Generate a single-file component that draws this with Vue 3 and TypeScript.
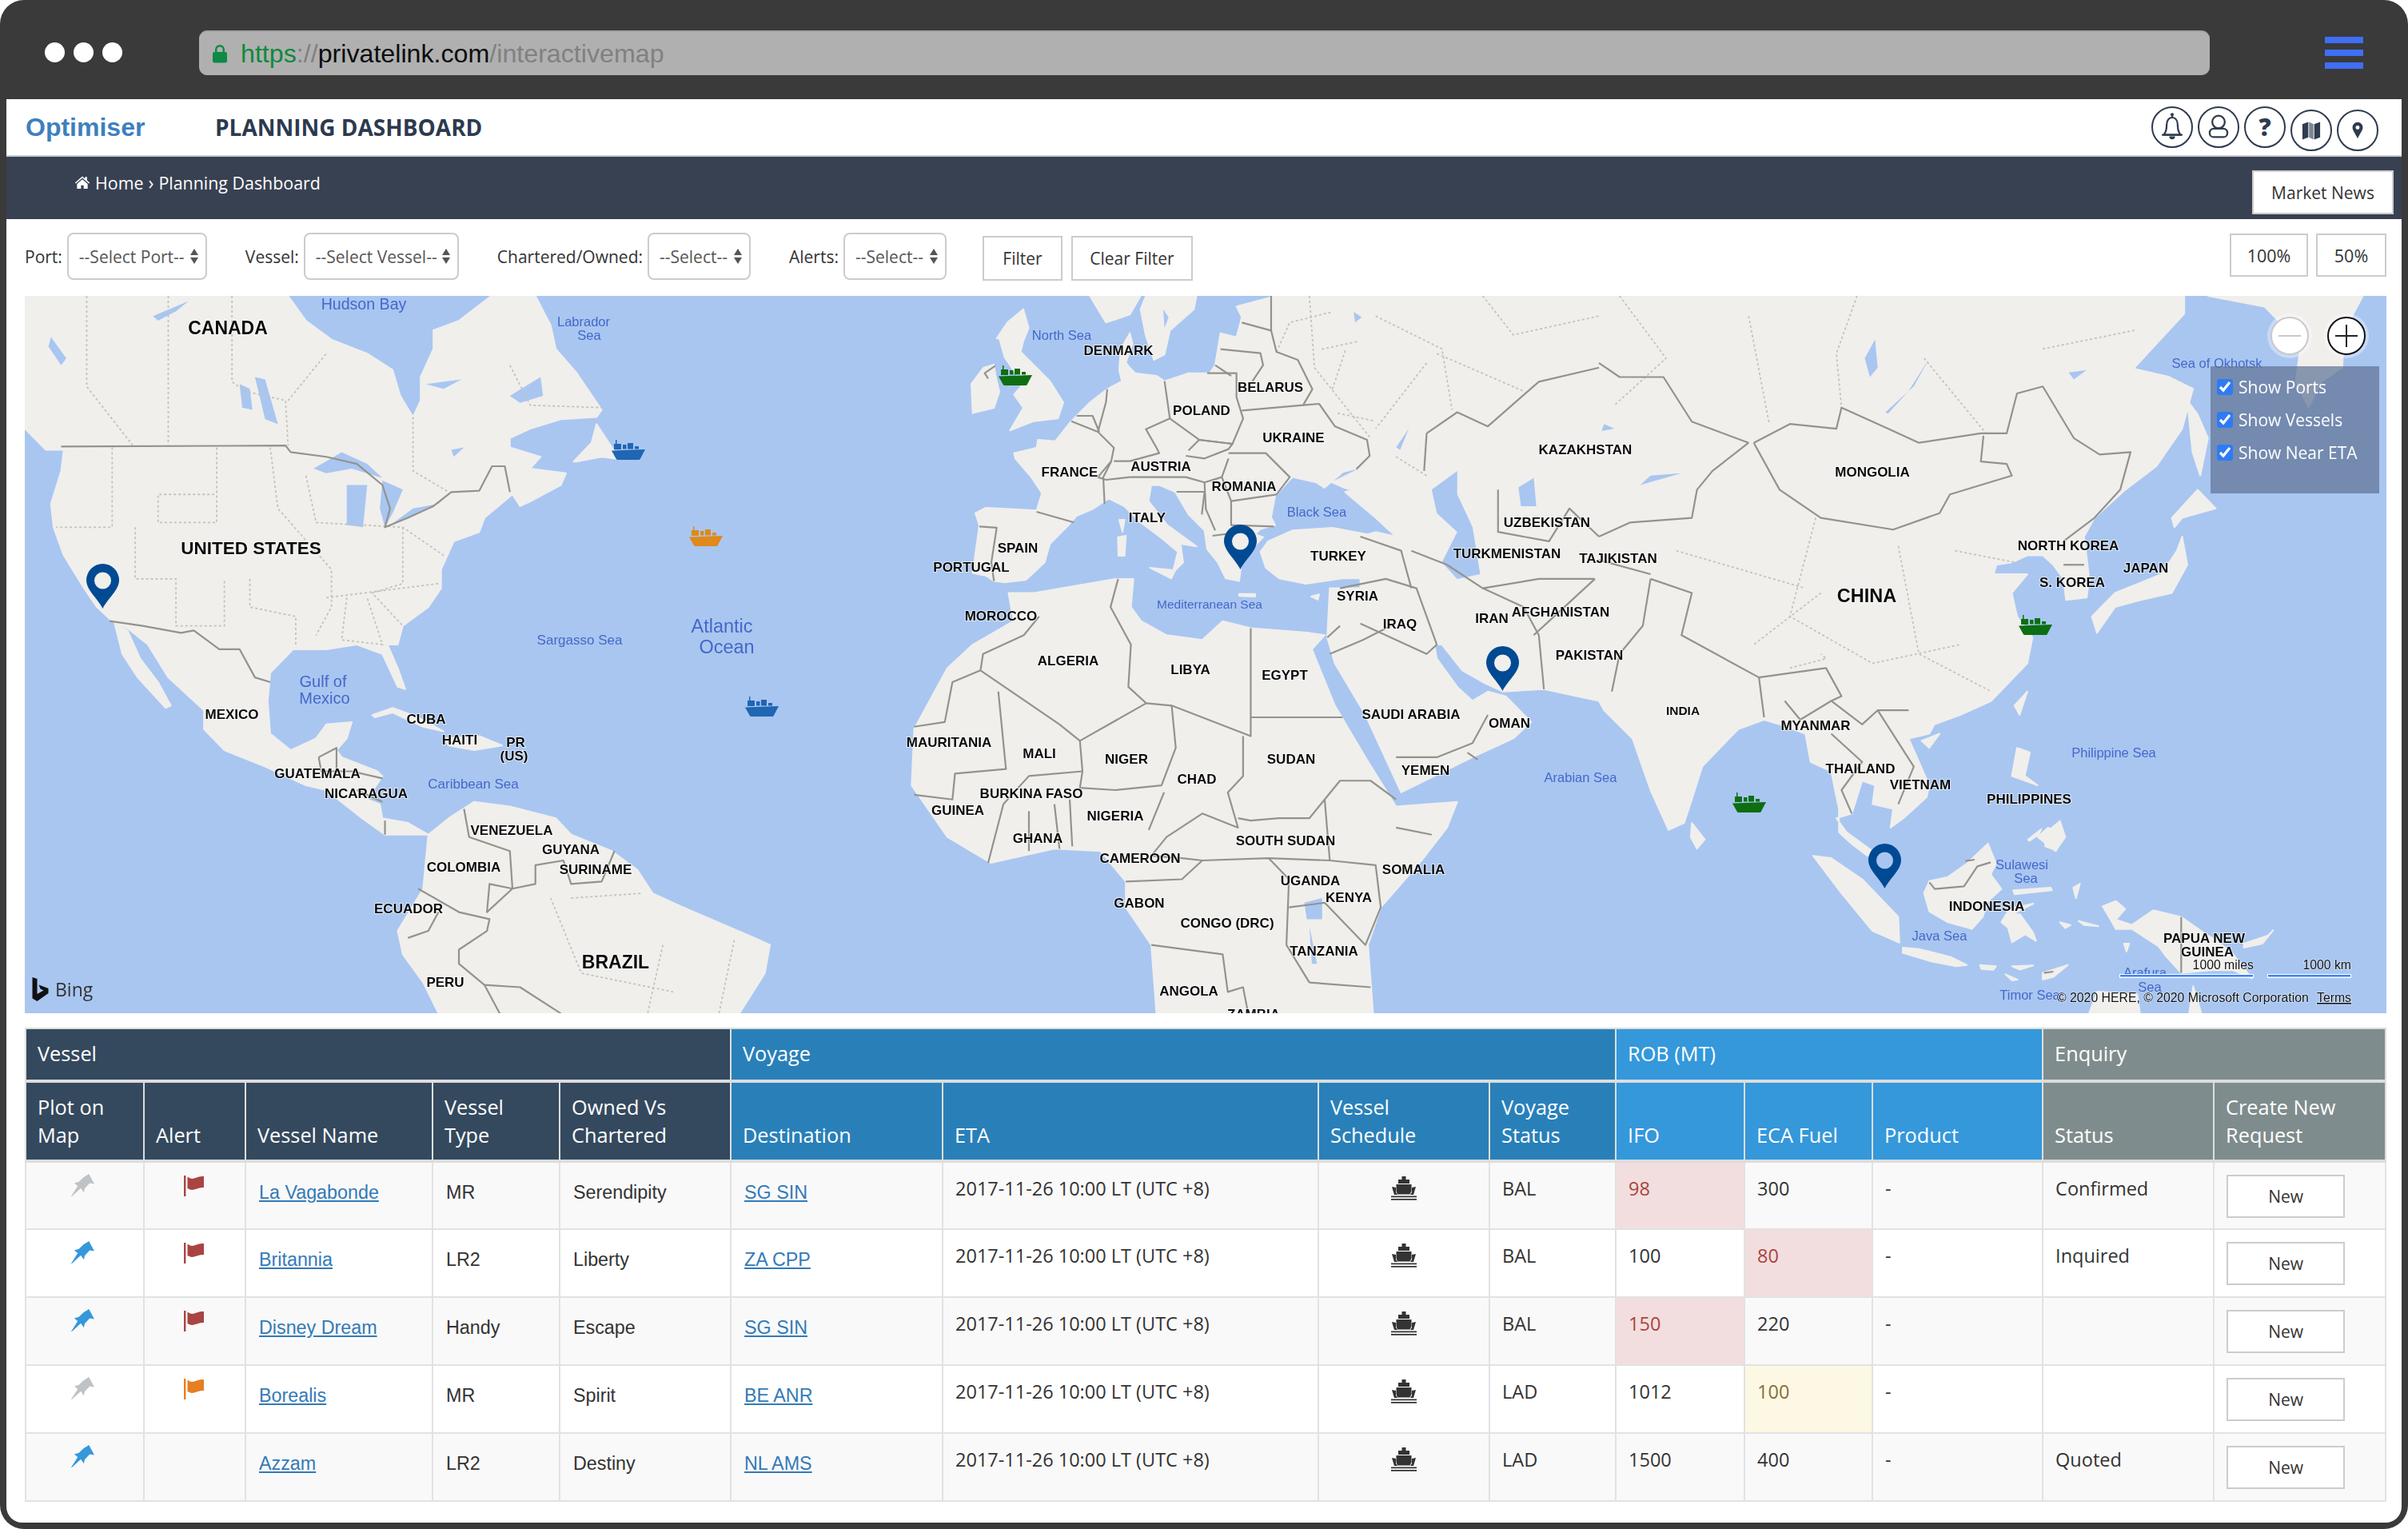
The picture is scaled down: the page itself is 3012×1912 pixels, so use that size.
<script setup lang="ts">
// Planning dashboard inside a browser mockup. The map is a hand drawn svg,
// its shapes are grouped per tile so each one can be placed with one transform.
interface Tile {
  at: string
  land: string[]
  water?: string[]
  borders?: string[]
  dotted?: string[]
}

const tiles: Tile[] = [
  {
    at: 'translate(0 360) scale(.6378 .5869)',
    land: [
      '49,17 565,17 600,70 650,110 720,140 770,175 785,230 810,275 825,240 825,190 850,130 850,90 900,70 960,20 965,17 1050,17 1080,80 1090,130 1130,180 1180,260 1170,275 1100,280 1040,300 1000,320 1000,340 1060,360 1040,385 1110,395 1100,420 1040,455 1020,465 1005,440 950,490 940,520 890,540 865,600 865,640 840,680 790,720 780,760 760,760 780,810 795,855 780,850 750,780 700,760 640,770 575,770 530,820 525,880 530,950 570,985 620,960 640,930 690,925 680,960 660,985 670,1000 740,1030 750,1040 720,1090 745,1100 750,1130 800,1140 840,1165 800,1165 755,1165 710,1130 640,1070 600,1060 520,1020 440,985 400,940 400,900 330,830 290,760 250,725 220,710 190,680 165,640 125,570 105,510 100,460 120,390 125,345 90,345 49,300',
      '225,715 250,730 275,790 310,840 335,890 325,895 270,830 240,780',
      '730,910 770,895 820,915 870,945 830,935 770,905 735,915',
      '870,960 940,955 985,975 930,985 880,975',
      '1125,370 1160,330 1170,290 1200,340 1215,365 1180,360 1130,370',
      '840,1165 880,1130 930,1095 1000,1105 1090,1130 1120,1165 1200,1200 1250,1240 1280,1290 1340,1320 1480,1385 1510,1400 1500,1460 1450,1546 860,1546 830,1480 790,1420 780,1370 830,1280 835,1220'
    ],
    water: [
      '615,385 670,350 720,375 750,405 690,385 640,395',
      '680,420 720,420 712,510 680,505',
      '750,410 790,430 770,480 755,510 745,470',
      '760,510 810,470 860,460 880,440 850,465 800,490',
      '500,190 520,195 545,290 520,280',
      '300,60 370,28 345,50 310,70',
      '470,205 490,215 495,260 475,255',
      '100,105 130,150 120,165 95,125',
      '835,205 905,195 870,215',
      '1000,230 1060,190 1065,230 1020,245',
      '885,345 910,340 890,360'
    ],
    borders: [
      '120,338 560,336 570,350 640,360 700,375 750,420 765,470 755,510 800,490 850,465 885,435 940,432 965,380 990,380 1000,435',
      '215,710 280,720 355,735 380,730 430,770 470,770 500,830 530,840',
      '625,1000 660,980 660,1030',
      '625,1000 630,1030 690,1030 750,1045',
      '700,1070 750,1095',
      '755,1135 755,1165',
      '910,1110 920,1170 1000,1200 1005,1280 960,1270 955,1330 1005,1280 1050,1270 1050,1230 1105,1220 1120,1270 1180,1265 1205,1200',
      '820,1280 900,1330 960,1345 955,1370 900,1410 900,1440 950,1485 1020,1490 1100,1546',
      '860,1330 840,1370 800,1385',
      '950,1485 980,1546'
    ],
    dotted: [
      '170,17 170,210 260,335',
      '330,17 330,335',
      '455,17 455,200 480,220 560,240 565,336',
      '565,240 640,140',
      '810,275 810,390 880,435',
      '1000,165 1040,250 1180,255',
      '220,340 220,510 110,510',
      '425,340 425,500 310,500 310,440 420,440',
      '265,510 265,620 345,620 345,720 440,720 440,620',
      '530,340 545,470 650,600 650,680 620,740',
      '600,400 620,500 790,510 870,570',
      '640,660 860,630',
      '490,620 490,680 580,700 580,760',
      '680,660 670,750 750,760 720,660',
      '790,510 790,630 730,650 790,720',
      '1080,1300 1140,1460 1320,1500',
      '1300,1400 1270,1546',
      '1440,1390 1410,1546',
      '1120,1300 1260,1290'
    ]
  },
  {
    at: 'translate(1000 360) scale(.6378 .5869)',
    land: [
      '1100,17 1100,425 1070,435 1130,490 1170,530 1130,520 1100,530 1100,640 1040,640 1035,745 1050,800 1110,910 1180,1075 1320,1000 1400,960 1435,925 1385,870 1350,860 1320,880 1290,850 1250,790 1245,760 1260,760 1300,815 1340,840 1380,860 1460,855 1568,880 1568,17',
      '410,650 460,650 620,620 655,620 650,680 670,710 720,740 790,750 830,710 885,725 1000,735 1030,740 1005,770 1050,890 1110,1000 1170,1105 1290,1095 1270,1150 1220,1220 1140,1320 1115,1400 1125,1546 700,1546 690,1400 640,1320 640,1265 590,1200 500,1195 375,1225 290,1170 220,1060 225,940 290,810 340,760 420,710'
    ],
    water: [
      '1240,430 1290,390 1290,440 1320,510 1335,610 1290,620 1260,585 1290,520 1250,480',
      '1410,425 1440,405 1445,465 1415,465',
      '990,1310 1025,1300 1025,1345 995,1345',
      '1000,1360 1015,1440 1005,1440',
      '1170,340 1195,300 1178,345'
    ],
    borders: [
      '355,815 510,930 550,965 680,885 730,890 885,955 885,725',
      '625,620 610,680 650,760 645,850 680,885',
      '470,700 440,740 360,780 355,815',
      '225,935 285,925 300,840 355,815',
      '390,860 405,1025 305,1035 300,1090 225,1080',
      '550,965 555,1030 450,1040 400,1100 370,1225',
      '730,890 738,980 710,1060 620,1070 550,1065 555,1030',
      '870,955 870,1040 840,1075 860,1150 790,1120 720,1170 690,1210',
      '885,915 1065,915',
      '860,1130 885,1135 940,1130 1000,1130 1030,1090 1060,1050 1120,1050 1170,1090',
      '1170,1150 1240,1165',
      '535,1190 530,1090',
      '450,1115 450,1200',
      '500,1100 510,1195',
      '685,1155 715,1075',
      '690,1210 750,1215 790,1220 920,1215 960,1260 955,1400 1000,1480',
      '640,1265 750,1260 790,1220',
      '690,1400 830,1420 840,1500 870,1490 880,1546',
      '1040,1220 1130,1230 1140,1320 1110,1400 1030,1310 960,1320',
      '1000,1480 1120,1490',
      '920,1215 1040,1220 1030,1090',
      '1040,780 1105,750 1160,720',
      '1170,1000 1250,1000 1320,970 1350,910',
      '1310,990 1330,1005',
      '1100,715 1230,780 1250,760 1210,640 1150,620 1060,640',
      '1060,720 1035,745',
      '1230,310 1290,265 1350,295 1450,200 1568,170',
      '1230,310 1225,390',
      '1270,590 1340,640 1450,620 1560,620',
      '1370,430 1370,520 1470,540 1510,470 1568,530',
      '1420,680 1450,740 1460,855',
      '1340,640 1420,680',
      '1560,620 1480,700 1440,740',
      '1100,530 1180,560 1200,640',
      '1200,560 1270,590'
    ],
    dotted: [
      '1130,60 1260,130 1280,260',
      '1250,140 1420,220',
      '1000,17 1010,170 1120,320',
      '1340,17 1400,100 1568,60',
      '1230,160 1130,300',
      '1170,360 1230,400'
    ]
  },
  {
    at: 'translate(2000 360) scale(.6456 .5869)',
    land: [
      '0,17 1134,17 1134,55 1036,172 1103,189 1151,215 1130,300 1080,380 1020,430 960,490 940,530 950,620 945,660 905,665 900,620 880,590 860,570 830,570 800,585 770,590 765,610 830,610 800,650 810,700 840,745 830,800 760,880 700,910 650,930 640,950 600,960 640,1060 635,1085 590,1130 565,1150 570,1110 530,1100 535,1060 510,1050 490,1120 460,1130 480,1160 530,1200 520,1210 490,1185 465,1160 465,1110 450,1030 410,1010 400,950 350,930 320,920 270,940 200,1020 180,1090 165,1140 135,1155 100,1070 65,960 10,900 0,880',
      '1180,17 1480,17 1445,90 1440,170 1400,200 1375,255 1350,200 1360,120 1290,40',
      '955,700 1000,650 1090,610 1120,560 1130,530 1140,590 1110,650 1050,665 1000,680 965,735',
      '1110,490 1160,430 1195,470 1130,490 1115,510',
      '1160,270 1140,240 1150,350 1165,400 1180,320',
      '805,890 830,860 815,910',
      '625,965 660,950 640,980',
      '180,1140 205,1175 190,1195 178,1170',
      '415,1210 450,1215 510,1260 580,1340 582,1395 530,1370 470,1290',
      '810,980 835,990 825,1040 850,1060 800,1040',
      '870,1150 900,1170 885,1200 850,1170'
    ],
    water: [
      '555,265 610,210 640,150 600,220 560,268',
      '80,420 160,395 100,400',
      '515,150 535,110 540,170 525,190',
      '910,180 945,175 920,195',
      '10,290 30,300 5,305'
    ],
    borders: [
      '0,160 40,190 125,190 180,285 290,330',
      '300,330 370,290 460,300 470,255 560,300 620,330 740,310 790,310 810,225 860,210 920,320 970,355 1030,350 1010,430 960,490 900,540',
      '300,330 350,430 430,490 570,515 660,480 680,440 800,400 790,375 740,370 745,315',
      '290,330 220,390 190,430 180,490 60,500 0,530',
      '100,620 180,650 160,740 310,830 440,810 470,870 450,880',
      '310,830 320,915',
      '360,880 390,920 450,880 510,930 540,900 600,900',
      '450,950 510,1010 470,1070 490,1120',
      '540,900 610,1020 580,1100',
      '100,620 85,720 40,780 25,860',
      '0,580 100,610',
      '900,590 940,590'
    ],
    dotted: [
      '40,17 130,150 30,250',
      '290,60 330,290',
      '500,17 460,140 470,255',
      '630,150 750,310',
      '860,130 1040,90',
      '420,490 370,700 530,800 700,760',
      '580,550 620,780 760,860',
      '690,560 830,590',
      '150,560 400,640',
      '430,650 300,760',
      '370,810 440,790 430,780'
    ]
  },
  {
    at: 'translate(1200 370) scale(.3333)',
    land: [
      '1185,750 1170,830 1185,860 1130,875 1110,895 1140,905 1060,990 1050,1070 1000,1060 970,1000 930,950 920,880 860,820 810,735 750,710 720,710 710,770 780,860 890,940 830,930 840,1000 800,1040 820,960 760,910 680,850 620,790 560,760 500,800 440,825 410,860 340,930 320,1000 250,1065 170,1075 130,1070 100,1050 50,1040 75,860 60,815 100,795 290,805 310,740 270,680 210,610 205,590 290,570 295,540 360,545 420,470 490,400 555,350 610,320 600,280 605,200 640,140 650,180 625,250 640,270 660,290 740,300 770,320 860,290 940,290 960,260 980,140 1040,155 1060,80 1040,40 1190,0 1560,0 1560,750 1445,720 1400,700 1520,640 1440,660 1370,720 1340,700 1250,680',
      '700,0 680,50 700,150 730,240 770,220 790,130 880,50 890,0',
      '490,0 550,100 640,70 680,0',
      '140,160 180,100 240,50 260,120 240,170 230,210 290,270 340,320 390,400 370,460 280,470 190,505 240,420 205,370 240,330 210,290 170,230 150,160',
      '45,330 90,270 130,258 135,295 150,360 130,420 50,440',
      '1130,960 1160,920 1250,880 1400,870 1560,900 1560,1060 1440,1060 1300,1080 1200,1060 1150,1020',
      '595,905 625,900 620,975 597,975',
      '600,840 620,840 612,885',
      '715,1020 810,1030 795,1060',
      '1050,1118 1110,1118 1110,1128 1050,1126',
      '1320,1128 1350,1120 1345,1140'
    ],
    water: ['765,50 785,80 770,120', '895,115 910,130 890,155', '1480,60 1510,80 1485,100'],
    borders: [
      '420,470 520,510 580,570 570,620 540,680 545,780',
      '520,510 550,400 555,350',
      '440,450 500,450 525,510',
      '770,320 790,460 700,500 740,570 750,590 640,620 580,620',
      '570,620 520,680 550,690 640,680',
      '790,460 900,540 1025,555 1065,460 1040,380 1040,290 930,290',
      '960,260 1020,300',
      '980,200 1130,215 1140,260 1100,320',
      '1060,100 1170,130 1190,210 1270,240 1325,350 1290,410 1060,430',
      '1170,130 1170,0',
      '1290,410 1350,405 1410,490 1530,540 1540,600 1490,650',
      '860,580 900,540 1025,555 1010,575 920,610 850,600',
      '1010,590 1150,590 1240,680 1190,745 1020,770 985,680 1010,610',
      '640,680 740,680 850,680 920,700 985,680',
      '815,735 920,735 910,820',
      '1020,770 1020,860 1180,865',
      '950,900 1100,880',
      '920,700 925,800 960,880',
      '75,865 140,870 120,1000 130,1070',
      '290,810 430,850',
      '135,262 95,290 108,310'
    ],
    dotted: ['1190,210 1240,100 1400,60', '1360,200 1500,170', '1400,350 1450,200', '1420,440 1560,470']
  },
  {
    at: 'translate(2380 980) scale(.3333)',
    land: [
      '80,410 100,365 170,350 240,300 320,225 350,300 330,340 370,395 320,440 300,500 260,545 170,520 100,480',
      '370,520 400,470 490,450 410,490 440,490 490,560 500,590 460,565 410,595 395,540',
      '415,400 555,390 560,400 420,415',
      '0,615 60,620 180,650 240,680 200,685 100,665 0,635',
      '290,680 350,685 340,698 295,695',
      '410,685 490,682 440,698',
      '385,715 430,735 410,738',
      '525,710 620,680 565,725 525,735',
      '530,190 590,140 610,200 575,250 535,235',
      '470,210 520,170 510,190 475,215',
      '750,460 800,440 835,470 800,510 860,530 940,475 1045,500 1130,560 1180,590 1240,640 1310,730 1240,700 1160,700 1045,710 990,650 960,610 860,545 800,545 780,510',
      '590,520 630,530 610,542',
      '660,515 735,535 680,530',
      '1280,600 1370,570 1390,550 1350,600 1280,615',
      '640,390 665,375 650,430',
      '700,860 730,780 880,790 890,860',
      '1075,860 1090,760 1120,860',
      '830,600 850,600 840,630'
    ],
    borders: ['100,370 120,395 230,385 280,310 330,295', '235,290 270,285', '1045,500 1045,710', '530,710 565,705']
  }
]

interface MapLabel {
  t: string
  x: number
  y: number
  s?: number
}

// x / y = centre of the label in page pixels
const countries: MapLabel[] = [
  { t: 'CANADA', x: 285, y: 410, s: 23 },
  { t: 'UNITED STATES', x: 314, y: 685, s: 22.5 },
  { t: 'MEXICO', x: 290, y: 893 },
  { t: 'CUBA', x: 533, y: 899 },
  { t: 'HAITI', x: 575, y: 925 },
  { t: 'PR', x: 645, y: 928 },
  { t: '(US)', x: 643, y: 945 },
  { t: 'GUATEMALA', x: 397, y: 967 },
  { t: 'NICARAGUA', x: 458, y: 992 },
  { t: 'VENEZUELA', x: 640, y: 1038 },
  { t: 'GUYANA', x: 714, y: 1062 },
  { t: 'SURINAME', x: 745, y: 1087 },
  { t: 'COLOMBIA', x: 580, y: 1084 },
  { t: 'ECUADOR', x: 511, y: 1136 },
  { t: 'BRAZIL', x: 770, y: 1203, s: 23 },
  { t: 'PERU', x: 557, y: 1228 },
  { t: 'DENMARK', x: 1399, y: 438 },
  { t: 'BELARUS', x: 1589, y: 484 },
  { t: 'POLAND', x: 1503, y: 513 },
  { t: 'UKRAINE', x: 1618, y: 547 },
  { t: 'KAZAKHSTAN', x: 1983, y: 562 },
  { t: 'FRANCE', x: 1338, y: 590 },
  { t: 'AUSTRIA', x: 1452, y: 583 },
  { t: 'ROMANIA', x: 1556, y: 608 },
  { t: 'ITALY', x: 1435, y: 647 },
  { t: 'UZBEKISTAN', x: 1935, y: 653 },
  { t: 'SPAIN', x: 1273, y: 685 },
  { t: 'TURKEY', x: 1674, y: 695 },
  { t: 'TURKMENISTAN', x: 1885, y: 692 },
  { t: 'TAJIKISTAN', x: 2024, y: 698 },
  { t: 'PORTUGAL', x: 1215, y: 709 },
  { t: 'SYRIA', x: 1698, y: 745 },
  { t: 'MOROCCO', x: 1252, y: 770 },
  { t: 'IRAQ', x: 1751, y: 780 },
  { t: 'IRAN', x: 1866, y: 773 },
  { t: 'AFGHANISTAN', x: 1952, y: 765 },
  { t: 'ALGERIA', x: 1336, y: 826 },
  { t: 'LIBYA', x: 1489, y: 837 },
  { t: 'EGYPT', x: 1607, y: 844 },
  { t: 'PAKISTAN', x: 1988, y: 819 },
  { t: 'SAUDI ARABIA', x: 1765, y: 893 },
  { t: 'OMAN', x: 1888, y: 904 },
  { t: 'MAURITANIA', x: 1187, y: 928 },
  { t: 'MALI', x: 1300, y: 942 },
  { t: 'NIGER', x: 1409, y: 949 },
  { t: 'SUDAN', x: 1615, y: 949 },
  { t: 'YEMEN', x: 1783, y: 963 },
  { t: 'CHAD', x: 1497, y: 974 },
  { t: 'BURKINA FASO', x: 1290, y: 992 },
  { t: 'GUINEA', x: 1198, y: 1013 },
  { t: 'NIGERIA', x: 1395, y: 1020 },
  { t: 'GHANA', x: 1298, y: 1048 },
  { t: 'SOUTH SUDAN', x: 1608, y: 1051 },
  { t: 'CAMEROON', x: 1426, y: 1073 },
  { t: 'SOMALIA', x: 1768, y: 1087 },
  { t: 'UGANDA', x: 1639, y: 1101 },
  { t: 'KENYA', x: 1687, y: 1122 },
  { t: 'GABON', x: 1425, y: 1129 },
  { t: 'CONGO (DRC)', x: 1535, y: 1154 },
  { t: 'TANZANIA', x: 1656, y: 1189 },
  { t: 'ANGOLA', x: 1487, y: 1239 },
  { t: 'ZAMBIA', x: 1568, y: 1268 },
  { t: 'MONGOLIA', x: 2342, y: 590 },
  { t: 'NORTH KOREA', x: 2587, y: 682 },
  { t: 'JAPAN', x: 2684, y: 710 },
  { t: 'S. KOREA', x: 2592, y: 728 },
  { t: 'CHINA', x: 2335, y: 745, s: 23.5 },
  { t: 'INDIA', x: 2105, y: 888, s: 15.5 },
  { t: 'MYANMAR', x: 2271, y: 907 },
  { t: 'THAILAND', x: 2327, y: 961 },
  { t: 'VIETNAM', x: 2402, y: 981 },
  { t: 'PHILIPPINES', x: 2538, y: 999 },
  { t: 'INDONESIA', x: 2485, y: 1133 },
  { t: 'PAPUA NEW', x: 2757, y: 1173 },
  { t: 'GUINEA', x: 2761, y: 1190 }
]

const seas: MapLabel[] = [
  { t: 'Hudson Bay', x: 455, y: 380, s: 19.6 },
  { t: 'Labrador', x: 730, y: 402 },
  { t: 'Sea', x: 737, y: 419 },
  { t: 'Sargasso Sea', x: 725, y: 800, s: 17 },
  { t: 'Atlantic', x: 903, y: 783, s: 23.5 },
  { t: 'Ocean', x: 909, y: 809, s: 23.5 },
  { t: 'Gulf of', x: 404, y: 852, s: 20 },
  { t: 'Mexico', x: 406, y: 873, s: 20 },
  { t: 'Caribbean Sea', x: 592, y: 980, s: 17 },
  { t: 'North Sea', x: 1328, y: 419 },
  { t: 'Black Sea', x: 1647, y: 640 },
  { t: 'Mediterranean Sea', x: 1513, y: 755, s: 15.5 },
  { t: 'Arabian Sea', x: 1977, y: 972 },
  { t: 'Sea of Okhotsk', x: 2773, y: 454 },
  { t: 'Philippine Sea', x: 2644, y: 941 },
  { t: 'Sulawesi', x: 2529, y: 1081 },
  { t: 'Sea', x: 2534, y: 1098 },
  { t: 'Java Sea', x: 2426, y: 1170 },
  { t: 'Arafura', x: 2683, y: 1216 },
  { t: 'Sea', x: 2689, y: 1234 },
  { t: 'Timor Sea', x: 2539, y: 1244 }
]

const pins = [
  { x: 108, y: 705 },
  { x: 1531, y: 656 },
  { x: 1859, y: 808 },
  { x: 2337, y: 1055 }
]

const ships = [
  { x: 765, y: 547, c: '#1f66b3' },
  { x: 862, y: 655, c: '#e0891c' },
  { x: 932, y: 868, c: '#1f66b3' },
  { x: 1249, y: 454, c: '#0d6e12' },
  { x: 2525, y: 766, c: '#0d6e12' },
  { x: 2167, y: 988, c: '#0d6e12' }
]

const colWidths = [148, 127, 234, 159, 214, 265, 470, 214, 158, 161, 160, 213, 214, 215]

const subHeads = [
  { t: ['Plot on', 'Map'], g: 'vessel' },
  { t: ['Alert'], g: 'vessel' },
  { t: ['Vessel Name'], g: 'vessel' },
  { t: ['Vessel', 'Type'], g: 'vessel' },
  { t: ['Owned Vs', 'Chartered'], g: 'vessel' },
  { t: ['Destination'], g: 'voyage' },
  { t: ['ETA'], g: 'voyage' },
  { t: ['Vessel', 'Schedule'], g: 'voyage' },
  { t: ['Voyage', 'Status'], g: 'voyage' },
  { t: ['IFO'], g: 'rob' },
  { t: ['ECA Fuel'], g: 'rob' },
  { t: ['Product'], g: 'rob' },
  { t: ['Status'], g: 'enquiry' },
  { t: ['Create New', 'Request'], g: 'enquiry' }
]

const rows = [
  { on: false, flag: '#a94442', name: 'La Vagabonde', type: 'MR', owner: 'Serendipity', dest: 'SG SIN', st: 'BAL', ifo: '98', ifoC: 'danger', eca: '300', ecaC: '', status: 'Confirmed' },
  { on: true, flag: '#a94442', name: 'Britannia', type: 'LR2', owner: 'Liberty', dest: 'ZA CPP', st: 'BAL', ifo: '100', ifoC: '', eca: '80', ecaC: 'danger', status: 'Inquired' },
  { on: true, flag: '#a94442', name: 'Disney Dream', type: 'Handy', owner: 'Escape', dest: 'SG SIN', st: 'BAL', ifo: '150', ifoC: 'danger', eca: '220', ecaC: '', status: '' },
  { on: false, flag: '#e67e22', name: 'Borealis', type: 'MR', owner: 'Spirit', dest: 'BE ANR', st: 'LAD', ifo: '1012', ifoC: '', eca: '100', ecaC: 'warning', status: '' },
  { on: true, flag: '', name: 'Azzam', type: 'LR2', owner: 'Destiny', dest: 'NL AMS', st: 'LAD', ifo: '1500', ifoC: '', eca: '400', ecaC: '', status: 'Quoted' }
]

const layers = ['Show Ports', 'Show Vessels', 'Show Near ETA']
</script>

<template>
  <div class="frame">
    <!-- browser chrome -->
    <div class="chrome">
      <div class="dots"><i></i><i></i><i></i></div>
      <div class="url">
        <svg class="lock" viewBox="0 0 20 24"><path d="M4 10V7a6 6 0 0 1 12 0v3h-2.4V7a3.6 3.6 0 0 0-7.2 0v3z" /><rect x="1" y="10" width="18" height="13.5" rx="2" /></svg>
        <span class="u-green">https</span><span class="u-grey">://</span><span class="u-dark">privatelink.com</span><span class="u-grey">/interactivemap</span>
      </div>
      <div class="burger"><i></i><i></i><i></i></div>
    </div>

    <div class="page">
      <header class="top">
        <span class="brand">Optimiser</span>
        <h1 class="title">PLANNING DASHBOARD</h1>
        <div class="tools">
          <span class="tool">
            <svg viewBox="0 0 52 52"><path d="M26 8.500v4M14.500 36.500c3-3.500 4-7 4-13 0-6.500 3-10.500 7.500-10.500s7.500 4 7.500 10.500c0 6 1 9.500 4 13z" fill="none" stroke="#2f3b4e" stroke-width="2.400" stroke-linejoin="round" stroke-linecap="round" /><circle cx="26" cy="9" r="2.200" fill="#2f3b4e" /><path d="M13 36.500h26" stroke="#2f3b4e" stroke-width="2.400" stroke-linecap="round" /><path d="M22 38.500a4 4 0 0 0 8 0z" fill="#2f3b4e" /></svg>
          </span>
          <span class="tool">
            <svg viewBox="0 0 52 52"><circle cx="26" cy="19" r="8.500" fill="none" stroke="#2f3b4e" stroke-width="2.500" /><rect x="14" y="28" width="24" height="11.500" rx="5.500" fill="none" stroke="#2f3b4e" stroke-width="2.500" /></svg>
          </span>
          <span class="tool q">?</span>
          <span class="tool low">
            <svg viewBox="0 0 52 52"><path d="M14 17.500l8-3v21l-8 3z" fill="#2f3b4e" /><path d="M23 14.500l6 3v21l-6-3z" fill="#7d8593" /><path d="M30 17.500l8-3v21l-8 3z" fill="#2f3b4e" /></svg>
          </span>
          <span class="tool low">
            <svg viewBox="0 0 52 52"><path fill-rule="evenodd" d="M26 15a7 7 0 0 1 7 7c0 4.500-4.500 9.500-7 15-2.500-5.500-7-10.500-7-15a7 7 0 0 1 7-7zm0 4.500a2.700 2.700 0 1 0 0 5.400 2.700 2.700 0 0 0 0-5.400z" fill="#2f3b4e" /></svg>
          </span>
        </div>
      </header>

      <div class="band">
        <div class="crumbs">
          <svg class="home" viewBox="0 0 24 20"><path d="M12 1L1 10.500l1.200 1.300L12 3.500l9.800 8.300 1.200-1.300L19 7V2h-3v2.500z" /><path d="M12 5.500L4 12.300V19.500h6v-5h4v5h6v-7.200z" /></svg>
          <span>Home</span>
          <span class="sep">›</span>
          <span>Planning Dashboard</span>
        </div>
        <button class="btn news" type="button">Market News</button>
      </div>

      <div class="filters">
        <label class="fld">Port:
          <span class="sel w-port"><select><option>--Select Port--</option></select></span>
        </label>
        <label class="fld">Vessel:
          <span class="sel w-vessel"><select><option>--Select Vessel--</option></select></span>
        </label>
        <label class="fld">Chartered/Owned:
          <span class="sel w-short"><select><option>--Select--</option></select></span>
        </label>
        <label class="fld">Alerts:
          <span class="sel w-short"><select><option>--Select--</option></select></span>
        </label>
        <button class="btn f-btn" type="button">Filter</button>
        <button class="btn f-btn clear" type="button">Clear Filter</button>
        <div class="zoom-btns">
          <button class="btn z-btn pct100" type="button">100%</button>
          <button class="btn z-btn pct50" type="button">50%</button>
        </div>
      </div>

      <!-- map -->
      <div class="map">
        <svg class="map-svg" viewBox="31 370 2954 897" width="2954" height="897">
          <g class="soft">
            <g v-for="tile in tiles" :key="tile.at" :transform="tile.at">
              <polygon v-for="p in tile.land" :key="p" :points="p" class="land" />
            </g>
            <g v-for="tile in tiles" :key="tile.at + 'w'" :transform="tile.at">
              <polygon v-for="p in tile.water" :key="p" :points="p" class="lake" />
              <polyline v-for="p in tile.dotted" :key="p" :points="p" class="dotted" />
              <polyline v-for="p in tile.borders" :key="p" :points="p" class="border" />
            </g>
          </g>

          <text v-for="l in seas" :key="l.t + l.x" class="sea" :x="l.x" :y="l.y + (l.s || 16.500) * 0.36" :font-size="l.s || 16.500" text-anchor="middle">{{ l.t }}</text>
          <text v-for="l in countries" :key="l.t + l.x" class="country" :x="l.x" :y="l.y + (l.s || 17) * 0.36" :font-size="l.s || 17" text-anchor="middle">{{ l.t }}</text>

          <g v-for="s in ships" :key="s.x" :transform="`translate(${s.x} ${s.y})`" :fill="s.c">
            <path d="M0 16.500l42-1.500-6 11.500q-.5 1.500-2 1.500H8q-2 0-2.500-1.500z" />
            <path d="M5 3h1.500v6H5zM3 8h9v7H3zM14 9h4.500v5.500H14zM20 7h7v7.500h-7zM29 11h5v3.500h-5z" />
          </g>
          <path v-for="p in pins" :key="p.x" :transform="`translate(${p.x} ${p.y})`" class="pin" fill-rule="evenodd" d="M20.500 0A20.500 20.500 0 0 1 41 20.500C41 33 27 43 20.500 56 14 43 0 33 0 20.500A20.500 20.500 0 0 1 20.500 0zm0 10.500a10.500 10.500 0 1 0 0 21 10.500 10.500 0 0 0 0-21z" />

          <!-- scale and copyright -->
          <text class="fine" x="2819" y="1212" text-anchor="end">1000 miles</text>
          <text class="fine" x="2941" y="1212" text-anchor="end">1000 km</text>
          <rect x="2651" y="1218" width="168" height="5" fill="#fff" />
          <rect x="2652" y="1219" width="166" height="2.500" fill="#3b82f6" />
          <rect x="2836" y="1218" width="105" height="5" fill="#fff" />
          <rect x="2837" y="1219" width="103" height="2.500" fill="#3b82f6" />
          <text class="fine" x="2573" y="1253">© 2020 HERE, © 2020 Microsoft Corporation</text>
          <text class="fine terms" x="2898" y="1253">Terms</text>
        </svg>

        <div class="bing">
          <svg viewBox="0 0 20 30" class="bing-b"><path d="M0 0l6 2v19l8-4.500-4-2-2-5 12 4.500v6L6 30l-6-3.500z" /></svg>
          <span>Bing</span>
        </div>

        <div class="zoom-ctl">
          <span class="z-round off"><i class="bar"></i></span>
          <span class="z-round on"><i class="bar"></i><i class="bar v"></i></span>
        </div>

        <div class="layers">
          <label v-for="l in layers" :key="l" class="layer"><input type="checkbox" checked />{{ l }}</label>
        </div>
      </div>

      <!-- vessel table -->
      <table class="grid">
        <colgroup>
          <col v-for="(w, i) in colWidths" :key="i" :style="{ width: w + 'px' }" />
        </colgroup>
        <thead>
          <tr class="groups">
            <th colspan="5" class="vessel">Vessel</th>
            <th colspan="4" class="voyage">Voyage</th>
            <th colspan="3" class="rob">ROB (MT)</th>
            <th colspan="2" class="enquiry">Enquiry</th>
          </tr>
          <tr class="subs">
            <th v-for="h in subHeads" :key="h.t.join()" :class="h.g">
              <span v-for="line in h.t" :key="line" class="line">{{ line }}</span>
            </th>
          </tr>
        </thead>
        <tbody>
          <tr v-for="r in rows" :key="r.name">
            <td class="icon-cell">
              <svg class="tack" viewBox="0 0 30 29" :fill="r.on ? '#3498db' : '#bdc3c7'"><path d="M23 0l7 13-6-1-6.500 7-1 5-4-5.500L1 29H0l8.500-13.500L4 12l6-2 6-5.500z" /></svg>
            </td>
            <td class="icon-cell">
              <svg v-if="r.flag" class="flag" viewBox="0 0 25 26" :fill="r.flag"><path d="M0 0h2.400v26H0zM4.500 1.500c3 2 5 3 8.500 2s5-2.500 12-2.500v14c-6 0-8 1.500-12 2.500s-5.500 0-8.500-1.500z" /></svg>
            </td>
            <td class="low"><a href="#">{{ r.name }}</a></td>
            <td class="low">{{ r.type }}</td>
            <td class="low">{{ r.owner }}</td>
            <td class="low"><a href="#">{{ r.dest }}</a></td>
            <td>2017-11-26 10:00 LT (UTC +8)</td>
            <td class="icon-cell">
              <svg class="boat" viewBox="0 0 32 30" fill="#333"><path d="M13.500 0h5v4h-5zM9 4h14v5H9zM6.500 10h19v8.500l-2 4h-15.500l-1.500-4z" /><path d="M1 13l5 1v6l2 3H4zM31 13l-5 1v6l-2 3h4z" /><path d="M0 24.500h32v1.800H0zM0 28h32v1.800H0z" /></svg>
            </td>
            <td>{{ r.st }}</td>
            <td :class="r.ifoC">{{ r.ifo }}</td>
            <td :class="r.ecaC">{{ r.eca }}</td>
            <td>-</td>
            <td>{{ r.status }}</td>
            <td class="new-cell"><button class="btn new" type="button">New</button></td>
          </tr>
        </tbody>
      </table>
    </div>
  </div>
</template>

<style>
html,
body {
  margin: 0;
  background: #fff;
}
</style>

<style scoped>
.frame {
  width: 3012px;
  height: 1912px;
  box-sizing: border-box;
  padding: 0 8px 8px;
  background: #3a3a3a;
  border-radius: 30px;
  display: flex;
  flex-direction: column;
  font-family: "Open Sans", sans-serif;
  color: #333;
  overflow: hidden;
}

.chrome {
  height: 124px;
  flex: none;
  display: flex;
  align-items: center;
  position: relative;
}

.dots {
  display: flex;
  gap: 11px;
  margin: 6px 96px 0 48px;
}

.dots i {
  width: 25px;
  height: 25px;
  border-radius: 50%;
  background: #fff;
}

.url {
  width: 2515px;
  height: 56px;
  margin-top: 8px;
  box-sizing: border-box;
  display: flex;
  align-items: center;
  padding-left: 16px;
  background: #b0b0b0;
  border-top: 2px solid #a2a2a2;
  border-radius: 10px;
  font-family: "Liberation Sans", sans-serif;
  font-size: 32.200px;
}

.lock {
  width: 20px;
  height: 24px;
  margin-right: 16px;
  fill: #0e8a45;
}

.u-green { color: #0d8a3c; }
.u-grey { color: #808080; }
.u-dark { color: #0c0c0c; }

.burger {
  margin-left: 144px;
  margin-top: 8px;
  display: flex;
  flex-direction: column;
  gap: 8px;
}

.burger i {
  width: 48px;
  height: 8px;
  background: #3f6ff5;
}

.page {
  flex: 1;
  background: #fff;
  border-radius: 0 0 20px 20px;
  min-height: 0;
}

.top {
  height: 72px;
  box-sizing: border-box;
  display: flex;
  align-items: center;
  padding: 0 29px 0 24px;
  border-bottom: 2px solid #c9ccd1;
}

.brand {
  font-family: "Liberation Sans", sans-serif;
  font-weight: 700;
  font-size: 32px;
  color: #3d7fbf;
  width: 237px;
}

.title {
  margin: 0;
  font-size: 28px;
  font-weight: 700;
  color: #2c3a4f;
}

.tools {
  margin-left: auto;
  display: flex;
  gap: 6px;
}

.tool {
  width: 52px;
  height: 52px;
  box-sizing: border-box;
  border: 2px solid #2f3b4e;
  border-radius: 50%;
  display: flex;
  align-items: center;
  justify-content: center;
  background: #fff;
}

.tool svg {
  width: 48px;
  height: 48px;
}

.tool.low {
  transform: translateY(4px);
}

.q {
  font-size: 30px;
  font-weight: 800;
  color: #2f3b4e;
  line-height: 1;
}

.band {
  height: 78px;
  box-sizing: border-box;
  display: flex;
  justify-content: space-between;
  background: #384152;
  padding: 17px 10px 0 85px;
}

.crumbs {
  display: flex;
  align-items: center;
  gap: 6px;
  height: 30px;
  color: #fff;
  font-size: 21.400px;
}

.sep {
  font-size: 23px;
}

.home {
  width: 20px;
  height: 18px;
  fill: #fff;
}

.btn {
  box-sizing: border-box;
  background: #fff;
  border: 2px solid #ccc;
  font-family: inherit;
  color: #333;
  padding: 0;
}

.news {
  width: 177px;
  height: 55px;
  font-size: 21px;
}

.filters {
  height: 96px;
  box-sizing: border-box;
  display: flex;
  align-items: flex-start;
  padding: 18px 19px 0 23px;
}

.fld {
  display: flex;
  align-items: center;
  gap: 6px;
  font-size: 21px;
  height: 59px;
  margin-right: 48px;
  margin-top: -1px;
}

.sel {
  position: relative;
  display: block;
  height: 59px;
}

.sel::before,
.sel::after {
  content: "";
  position: absolute;
  right: 11px;
  border-left: 5px solid transparent;
  border-right: 5px solid transparent;
  pointer-events: none;
}

.sel::before {
  top: 20px;
  border-bottom: 8px solid #555;
}

.sel::after {
  top: 31px;
  border-top: 8px solid #555;
}

.sel select {
  appearance: none;
  width: 100%;
  height: 100%;
  box-sizing: border-box;
  padding: 0 0 0 13px;
  background: #fff;
  border: 2px solid #ccc;
  border-radius: 8px;
  font-family: inherit;
  font-size: 21px;
  color: #555;
}

.w-port { width: 175px; }
.w-vessel { width: 194px; }
.w-short { width: 129px; }

.f-btn {
  width: 100px;
  height: 56px;
  font-size: 21px;
  margin-top: 3px;
  margin-left: -3px;
}

.clear {
  width: 152px;
  margin-left: 11px;
}

.zoom-btns {
  margin-left: auto;
  display: flex;
  gap: 10px;
}

.z-btn {
  height: 54px;
  font-size: 21.500px;
}

.pct100 { width: 98px; }
.pct50 { width: 88px; }

.map {
  position: relative;
  width: 2954px;
  height: 897px;
  margin-left: 23px;
  background: #a9c6f1;
  overflow: hidden;
}

.map-svg {
  display: block;
  font-family: "Liberation Sans", sans-serif;
}

.soft {
  filter: blur(0.7px);
}

.land {
  fill: #f0efec;
  stroke: #f0efec;
  stroke-width: 2px;
  stroke-linejoin: round;
  vector-effect: non-scaling-stroke;
}

.lake {
  fill: #a9c6f1;
}

.border {
  fill: none;
  stroke: #93938d;
  stroke-width: 2.200;
  stroke-linejoin: round;
  vector-effect: non-scaling-stroke;
}

.dotted {
  fill: none;
  stroke: #c3c2bb;
  stroke-width: 1.800;
  stroke-dasharray: 3 3;
  vector-effect: non-scaling-stroke;
}

.country {
  font-weight: 700;
  fill: #0a0a0a;
  stroke: rgba(255, 255, 255, 0.65);
  stroke-width: 2px;
  paint-order: stroke;
}

.sea {
  fill: #4468c9;
}

.pin {
  fill: #004a94;
}

.fine {
  font-size: 15.800px;
  fill: #111;
  stroke: rgba(255, 255, 255, 0.5);
  stroke-width: 1.500px;
  paint-order: stroke;
}

.terms {
  text-decoration: underline;
}

.bing {
  position: absolute;
  left: 9px;
  bottom: 14px;
  display: flex;
  align-items: center;
  gap: 8px;
  color: #333;
  font-size: 23px;
}

.bing-b {
  width: 21px;
  height: 30px;
  fill: #111;
}

.zoom-ctl {
  position: absolute;
  left: 2809px;
  top: 26px;
  display: flex;
  gap: 23px;
}

.z-round {
  position: relative;
  width: 48px;
  height: 48px;
  box-sizing: border-box;
  border-radius: 50%;
  background: #fff;
  box-shadow: 0 0 0 4px rgba(255, 255, 255, 0.35);
}

.z-round.off {
  border: 2px solid #c9c9c9;
  color: #c9c9c9;
}

.z-round.on {
  border: 2px solid #111;
  color: #222;
}

.bar {
  position: absolute;
  left: 8px;
  right: 8px;
  top: 21px;
  height: 2px;
  background: currentColor;
}

.bar.v {
  left: 21px;
  right: auto;
  width: 2px;
  top: 8px;
  height: 28px;
}

.layers {
  position: absolute;
  left: 2734px;
  top: 88px;
  width: 211px;
  height: 159px;
  box-sizing: border-box;
  padding-top: 5px;
  background: rgba(95, 115, 150, 0.72);
}

.layer {
  display: flex;
  align-items: center;
  height: 41px;
  padding-left: 8px;
  color: #fff;
  font-size: 21px;
  white-space: nowrap;
}

.layer input {
  width: 20px;
  height: 20px;
  margin: 0 7px 0 0;
  accent-color: #2f7bf6;
}

.grid {
  width: 2952px;
  margin: 18px 0 0 23px;
  table-layout: fixed;
  border-collapse: collapse;
  font-size: 23.500px;
}

.grid th {
  box-sizing: border-box;
  border: 2px solid #ddd;
  padding: 0 14px;
  text-align: left;
  vertical-align: bottom;
  color: #fff;
  font-size: 25.300px;
  font-weight: 500;
  line-height: 35px;
}

.line {
  display: block;
}

.groups th {
  height: 66px;
  vertical-align: middle;
  border-bottom-width: 4px;
  padding-bottom: 2px;
}

.subs th {
  height: 100px;
  padding-bottom: 13px;
  border-bottom-width: 4px;
}

.vessel { background: #34495e; }
.voyage { background: #2980b9; }
.rob { background: #3498db; }
.enquiry { background: #7f8c8d; }

.grid td {
  height: 85px;
  box-sizing: border-box;
  border: 2px solid #e2e2e2;
  padding: 15px 15px 0;
  vertical-align: top;
  line-height: 34px;
}

.grid tbody tr:nth-child(odd) td {
  background: #f9f9f9;
}

/* these columns are in Arial in the original, the rest in Open Sans */
.grid td.low {
  padding: 20px 15px 0 16px;
  font-family: "Liberation Sans", sans-serif;
  font-size: 23.300px;
}

.grid td a {
  color: #337ab7;
  text-decoration: underline;
}

.grid td.icon-cell {
  text-align: center;
  padding: 14px 0 0;
}

.tack {
  width: 29px;
  height: 28px;
  display: block;
  margin: 0 auto;
  transform: translateX(-3px);
}

.flag {
  width: 25px;
  height: 26px;
  display: block;
  margin: 2px auto 0;
  transform: translateX(-1px);
}

.boat {
  width: 32px;
  height: 30px;
  display: block;
  margin: 3px auto 0;
}

.grid tbody tr td.danger {
  background: #f2dede;
  color: #a94442;
}

.grid tbody tr td.warning {
  background: #fcf8e3;
  color: #8a6d3b;
}

.grid td.new-cell {
  padding: 15px 0 0 15px;
}

.new {
  width: 148px;
  height: 54px;
  font-size: 21px;
  display: block;
}
</style>
